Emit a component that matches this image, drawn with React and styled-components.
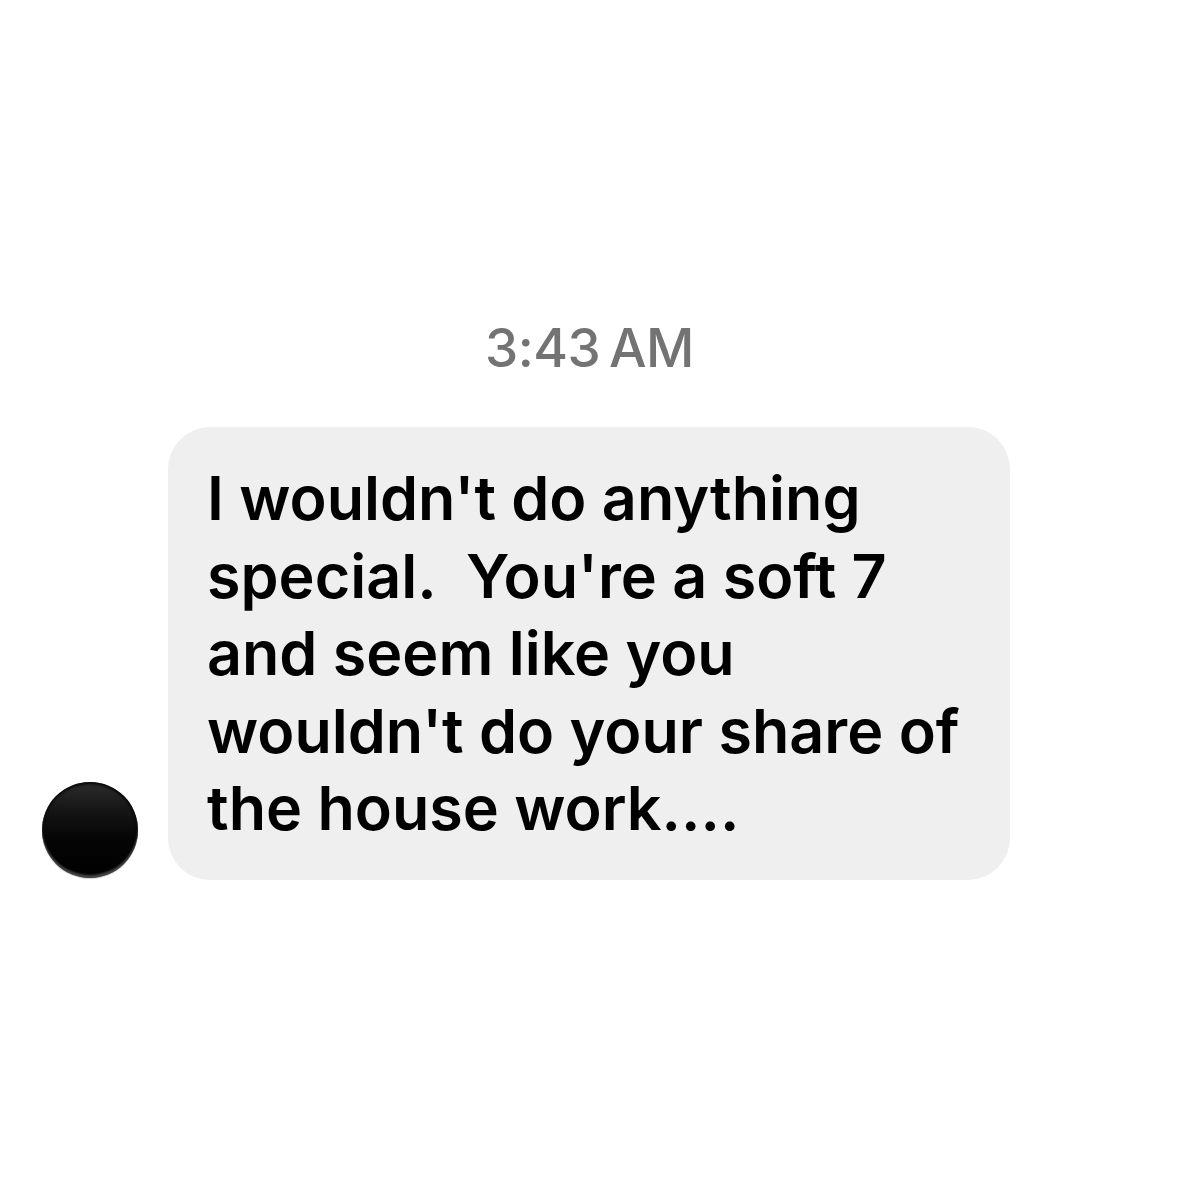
import React from "react";
import styled, { createGlobalStyle } from "styled-components";

const GlobalStyle = createGlobalStyle`
  html, body {
    margin: 0;
    padding: 0;
    background: #ffffff;
  }
  body {
    font-family: Inter, "Liberation Sans", Arial, sans-serif;
  }
`;

const Screen = styled.div`
  width: 1179px;
  height: 1179px;
  background: #ffffff;
  display: flex;
  flex-direction: column;
  align-items: stretch;
  padding-top: 318px;
  box-sizing: border-box;
`;

const Timestamp = styled.div`
  text-align: center;
  color: #737373;
  font-size: 53px;
  font-weight: 500;
  line-height: 60px;
  letter-spacing: -0.5px;
  margin-bottom: 49px;
`;

const MessageRow = styled.div`
  display: flex;
  flex-direction: row;
  align-items: flex-end;
  gap: 30px;
  padding-left: 42px;
`;

const Avatar = styled.div`
  width: 96px;
  height: 96px;
  border-radius: 50%;
  flex-shrink: 0;
  margin-bottom: 2px;
  background: linear-gradient(
    180deg,
    #2c2c2c 0%,
    #151515 30%,
    #050505 60%,
    #000000 100%
  );
  box-shadow: inset 0 -3px 2px rgba(110, 110, 110, 0.6),
    inset 0 2px 3px rgba(0, 0, 0, 0.9), 0 1px 1px rgba(0, 0, 0, 0.2);
`;

const Bubble = styled.div`
  background: #efefef;
  border-radius: 42px;
  width: 842px;
  box-sizing: border-box;
  padding: 33px 30px 32px 39px;
  color: #000000;
  font-size: 61px;
  font-weight: 600;
  line-height: 77.5px;
  letter-spacing: 0;
  white-space: pre-wrap;
`;

const message =
  "I wouldn't do anything\nspecial.  You're a soft 7\nand seem like you\nwouldn't do your share of\nthe house work....";

export default function App() {
  return (
    <>
      <GlobalStyle />
      <Screen>
        <Timestamp>3:43{"\u2009"}AM</Timestamp>
        <MessageRow>
          <Avatar />
          <Bubble>{message}</Bubble>
        </MessageRow>
      </Screen>
    </>
  );
}
